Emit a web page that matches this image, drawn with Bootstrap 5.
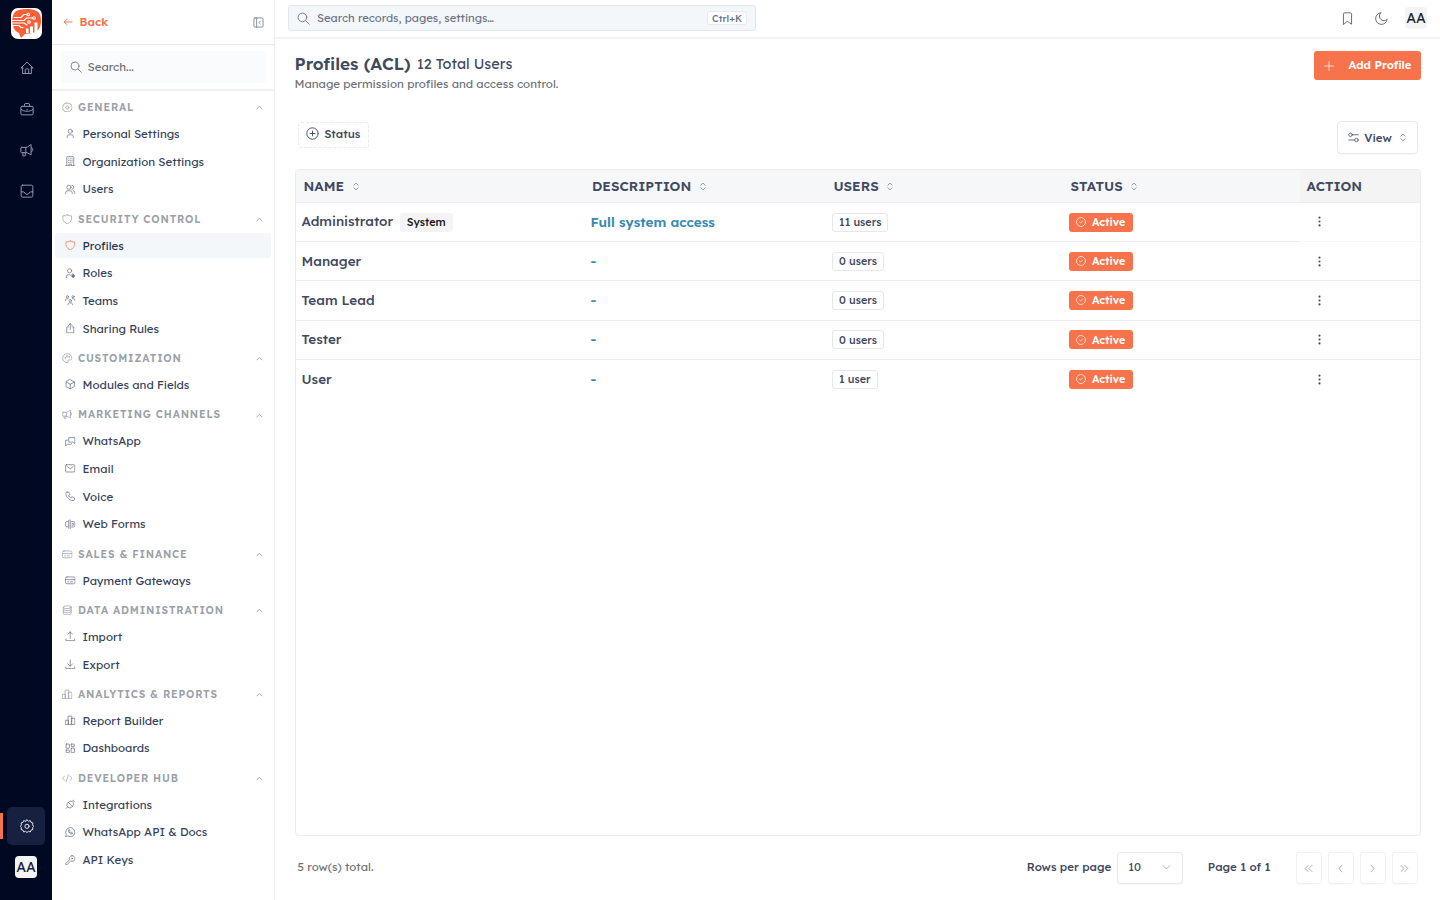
<!DOCTYPE html>
<html lang="en">
<head>
<meta charset="utf-8">
<meta name="viewport" content="width=device-width, initial-scale=1">
<title>Profiles (ACL)</title>
<link href="https://cdn.jsdelivr.net/npm/bootstrap@5.3.0/dist/css/bootstrap.min.css" rel="stylesheet">
<style>
:root{--ink:#3f4a5f;--accent:#f6734b;--line:#ebebee;--soft:#f3f7fa}
body{font-family:Lexend,Inter,sans-serif;font-size:11.52px;color:var(--ink);height:100vh;overflow:hidden;background:#fff}
svg{fill:none;stroke:currentColor;stroke-width:1.7;stroke-linecap:round;stroke-linejoin:round;flex:none;display:block}
.rail{width:52px;background:#010821;padding-top:7.5px;padding-bottom:22px}
.brand{margin-bottom:9px}
.rail-link{height:41px;color:#8f98ae;padding-left:1px}
.rail-link svg{width:14px;height:14px}
.rail-on{position:relative;width:38px;height:38px;margin:0 auto 11px;padding:0 0 1px 1px;border-radius:5px;background:#18203f;color:#e3e6ee}
.rail-on::before{content:"";position:absolute;left:-7px;top:6px;width:2.5px;height:26px;background:var(--accent)}
.initials{width:22px;height:22px;border-radius:4px;background:#f4f4f5;color:#182238;font-size:14px;line-height:22px;text-align:center}
.side{width:223px;border-right:1px solid #ececf2}
.side-top{height:45px;border-bottom:1px solid #e6e6ec;padding:0 10px 0 11px;color:#6d7484}
.back{color:var(--accent);font-weight:600;text-decoration:none;gap:6.5px}
.back svg{stroke-width:2.2}
.side-find{height:46px;border-bottom:2px solid #efeff4;padding:6px 8px 5px 9px}
.side-find div{height:32px;border-radius:4px;background:#f9fbfc;padding-left:9px;gap:5.5px;color:#6f7075}
.menu{padding:2px 3px 0 3px}
.group-title{height:28.45px;padding:1px 8px 0 7px;font-size:10.4px;font-weight:600;letter-spacing:.83px;color:#9b9fa8;gap:5px}
.group-title svg{width:10.5px;height:10.5px;margin-right:.5px;margin-bottom:1px}
.group-title svg:last-child{width:7px;height:7px;margin:0 0 0 auto;stroke-width:3}
.item{height:25px;margin-bottom:2.75px;padding:0 0 .9px 10px;gap:6.5px;color:#36425a;text-decoration:none;border-radius:3px}
.item svg{width:10.5px;height:10.5px;margin-right:.5px;color:#6d7484}
.item-on{background:var(--soft);color:#27344c}
.item-on svg{color:var(--accent)}
.top{height:39px;border-bottom:2px solid #f2f2f7;padding:5px 13px 6px 13px}
.find-all{width:468px;height:25.5px;background:#f4f7fa;border:1px solid #e2e6ee;border-radius:3px;padding:0 8px;color:#6c7487;gap:7px;font-size:11.25px}
.keys{font-size:9.7px;font-weight:500;line-height:12px;border:1px solid #e4e8ef;border-radius:3px;background:#fff;padding:0 4px;color:#6c7487;font-family:inherit}
.tools{gap:17px;color:#56617a}
.page-area{padding:0 19.5px}
.head{height:82px;padding-top:12px}
.title-row{gap:6px;height:25px}
h1{font-size:17.15px;font-weight:600;line-height:25px;margin:0}
.total{font-size:14.4px;line-height:26px}
.sub-line{line-height:15px;color:#6f7178}
.add{width:107px;height:29px;background:var(--accent);color:#fff;font-size:11.4px;font-weight:600;border-radius:3px;gap:14.5px;border:0}
.add svg{margin-left:1.5px}
.bar-row{height:48px}
.filter{height:26px;width:71.5px;border:1px dashed #e9e9eb;border-radius:3px;font-weight:500;gap:5px;margin:.5px 0 0 3px;padding-bottom:1.5px}
.view{width:81px;height:33px;border:1px solid #e8e8ea;border-radius:4px;font-weight:500;gap:5px;margin-right:2.5px;padding-right:1px;box-shadow:0 1px 2px #0000000a}
.sheet{height:667px;border:1px solid var(--line);border-radius:4px;overflow:hidden}
.grid-table{table-layout:fixed;width:100%;border-collapse:separate;border-spacing:0}
.grid-table th{height:33px;background:#f6f7f9;border-bottom:1px solid #eeeef0;font-size:13.5px;font-weight:600;padding:0 8px}
.grid-table th:nth-child(2){padding-left:8.5px}
.grid-table th:last-child{background:#f4f4f4;padding-left:7px}
.grid-table th span{display:inline-flex;align-items:center;gap:8.5px}
.grid-table th svg,.view svg:last-child{color:#8a8d94;width:6px;height:9px;stroke-width:2.2}
.view svg:last-child{margin-left:3px}
.grid-table td{height:39.2px;border-bottom:1px solid var(--line);padding:0 6px .5px;font-size:13.5px;font-weight:500}
.grid-table td:nth-child(2){color:#378ab0;font-weight:600;padding-left:7px}
.grid-table tr:last-child td{border-bottom:0}
.grid-table tbody tr:first-child td:last-child{border-bottom-color:#f8f8f9}
.grid-table td:last-child svg{margin-left:8px}
.chip{display:inline-flex;align-items:center;vertical-align:middle;height:19px;border-radius:3px;font-size:10.8px;padding:0 7px;margin-bottom:1px}
.chip-sys{background:#f4f4f5;color:#17171c;margin-left:6.5px}
.chip-count{border:1px solid #e8e8ea;padding:0 6px 0 6.5px}
.chip-live{width:64.5px;background:var(--accent);color:#fff;font-weight:600;gap:6.500px}
.foot{padding:16px 3px 0 3px;height:64px}
.foot span{padding-bottom:2px}
.foot .sub-line{padding-bottom:3px}
.pick{width:65.5px;height:32px;border:1px solid #e8e8ea;border-radius:4px;padding:0 11px 2px 10px;margin:0 25px 0 6px;box-shadow:0 1px 2px #0000000a}
.pagers{gap:6px;margin-left:25px}
.pg{width:26px;height:32px;border:1px solid #f0f0f2;border-radius:3px;color:#9c9fa8;box-shadow:0 1px 2px #00000006}
.pg svg,.pick svg{stroke-width:2.3}
.pick svg{color:#a4a7ae}
</style>
</head>
<body class="d-flex">
<svg class="d-none" aria-hidden="true">
<symbol id="home" viewBox="0 0 24 24"><path d="M5 12H1.500L12 2 22.500 12H19M4.500 11.500V21.500h15V11.500M9 21.500V15a1.500 1.500 0 0 1 1.500-1.500h3A1.500 1.500 0 0 1 15 15v6.500"/></symbol>
<symbol id="case" viewBox="0 0 24 24"><path d="M3.500 7.500h17a2 2 0 0 1 2 2V20a2 2 0 0 1-2 2h-17a2 2 0 0 1-2-2V9.500a2 2 0 0 1 2-2ZM7.500 7V5a2.500 2.500 0 0 1 2.500-2.500h4A2.500 2.500 0 0 1 16.500 5v2M2 13c6 4 14 4 20 0M12 12.500v1"/></symbol>
<symbol id="horn" viewBox="0 0 24 24"><path d="M2.500 7.500H10c4 0 8-5 9-5v18c-1 0-5-4-9-4H2.500a1 1 0 0 1-1-1v-7a1 1 0 0 1 1-1ZM10 7.500v9M5 16.500V22h4v-5.500M19.500 8c3.500 0 3.500 7 0 7"/></symbol>
<symbol id="inbox" viewBox="0 0 24 24"><rect x="2" y="2" width="20" height="20.500" rx="2.500"/><path d="M2 13.500h4.500l3.500 4h4l3.500-4H22"/></symbol>
<symbol id="gear" viewBox="0 0 24 24"><path d="m12 1.500 2.500 2.300 3.200-1 1.200 3 3.200 1-.6 3.300 2 2.400-2 2.400.6 3.200-3.200 1.100-1.200 3-3.200-1L12 23.200l-2.500-2-3.200 1-1.200-3-3.200-1.100.6-3.200-2-2.400 2-2.400L1.900 6.800l3.200-1 1.200-3 3.200 1Z"/><circle cx="12" cy="12.500" r="3.600"/></symbol>
<symbol id="back" viewBox="0 0 24 24"><path d="M21.500 12H3M10 5l-7 7 7 7"/></symbol>
<symbol id="panel" viewBox="0 0 24 24"><rect x="2" y="2" width="20" height="20" rx="2.500"/><path d="M8 2v20M16 9l-3 3 3 3"/></symbol>
<symbol id="find" viewBox="0 0 24 24"><circle cx="10" cy="10" r="8"/><path d="m16 16 6.500 6.500"/></symbol>
<symbol id="up" viewBox="0 0 24 24"><path d="m3 17 9-9 9 9"/></symbol>
<symbol id="down" viewBox="0 0 24 24"><path d="m3 7 9 9 9-9"/></symbol>
<symbol id="person" viewBox="0 0 24 24"><circle cx="12" cy="7.500" r="4.800"/><path d="M5 22.500V20a4.500 4.500 0 0 1 4.500-4.500h5A4.500 4.500 0 0 1 19 20v2.500"/></symbol>
<symbol id="building" viewBox="0 0 24 24"><path d="M1 22.500h22M4 22V3a1.500 1.500 0 0 1 1.500-1.500h13A1.500 1.500 0 0 1 20 3v19M8 6.500h1M12 6.500h.5M15.500 6.500h1M8 10.500h1M12 10.500h.5M15.500 10.500h1M8 14.500h1M12 14.500h.5M15.500 14.500h1M9 22v-3.500h6V22"/></symbol>
<symbol id="people" viewBox="0 0 24 24"><circle cx="9" cy="7.500" r="4.800"/><path d="M1.500 22.500V20A4.500 4.500 0 0 1 6 15.500h6a4.500 4.500 0 0 1 4.500 4.500v2.500M16 2.500a5 5 0 0 1 0 9.800M19 15.500a4.500 4.500 0 0 1 3.500 4.500v2.500"/></symbol>
<symbol id="shield" viewBox="0 0 24 24"><path d="M12 2C14.500 4 18 4.500 21.500 4c2 8.500-1.500 15.500-9.500 18.500C4 19.500.5 12.500 2.500 4 6 4.500 9.500 4 12 2Z"/></symbol>
<symbol id="role" viewBox="0 0 24 24"><circle cx="10.500" cy="6.500" r="4.800"/><path d="M3 22.500V20A4.500 4.500 0 0 1 7.500 15.500h4"/><path d="m18.500 13.500 4 4.500-4 4.500-4-4.500Z" fill="currentColor"/></symbol>
<symbol id="team" viewBox="0 0 24 24"><circle cx="12" cy="13" r="2.800"/><path d="M6.500 22.500c0-3 2-4.500 4-4.500h3c2 0 4 1.500 4 4.500"/><circle cx="5.500" cy="4" r="2.500"/><circle cx="18.500" cy="4" r="2.500"/><path d="M1 12.500c0-2.500 1.500-4 3.500-4H7M23 12.500c0-2.500-1.500-4-3.500-4H17"/></symbol>
<symbol id="share" viewBox="0 0 24 24"><path d="M8 9H4v13.500h16V9h-4M12 15V1.500M7.500 6 12 1.500 16.500 6"/></symbol>
<symbol id="palette" viewBox="0 0 24 24"><path d="M12 22.500A10.500 10.500 0 1 1 22.500 12c0 3-2 4-4 4h-3a2 2 0 0 0-1.500 3.500c.8 1 .3 3-2 3Z"/><circle cx="7.500" cy="11" r="1"/><circle cx="11" cy="7" r="1"/><circle cx="16" cy="9" r="1"/></symbol>
<symbol id="box" viewBox="0 0 24 24"><path d="m12 1.500 9.500 5.200v10.600L12 22.500l-9.500-5.200V6.700ZM12 12l9.500-5.300M12 12v10.500M12 12 2.500 6.700"/></symbol>
<symbol id="chat" viewBox="0 0 24 24"><path d="M9.500 3.500h13v14l-4-3.500h-9ZM6 9.500H1.500v13l4-3.500h9v-1"/></symbol>
<symbol id="mail" viewBox="0 0 24 24"><rect x="1.500" y="4" width="21" height="16.500" rx="2"/><path d="m5.500 8.500 6.500 5 6.500-5"/></symbol>
<symbol id="phone" viewBox="0 0 24 24"><path d="M5 2.500h3.500l2.500 6-3 2c1 2.500 3 4.500 5.500 5.500l2-3 6 2.500V19a3 3 0 0 1-3 3C10 22 2 14 2 5.500a3 3 0 0 1 3-3Z"/></symbol>
<symbol id="form" viewBox="0 0 24 24"><path d="M12 2v20M8.500 3v18M6 6H4a2.500 2.500 0 0 0-2.500 2.500v7A2.500 2.500 0 0 0 4 18h2M15 6h5a2.500 2.500 0 0 1 2.500 2.500v7A2.500 2.500 0 0 1 20 18h-5M16 10h3v4h-3"/></symbol>
<symbol id="creditcard" viewBox="0 0 24 24"><rect x="1" y="4.500" width="22" height="15.500" rx="3.500"/><path d="M1.500 10.500h21M6 15.500h2M12 15.500h5"/></symbol>
<symbol id="base" viewBox="0 0 24 24"><ellipse cx="12" cy="5" rx="9" ry="3.300"/><path d="M3 5v14c0 4.500 18 4.500 18 0V5M3 9.700c0 4.500 18 4.500 18 0M3 14.500c0 4.500 18 4.500 18 0"/></symbol>
<symbol id="upload" viewBox="0 0 24 24"><path d="M2 18v4h20v-4M12 17V2M6.500 7.500 12 2l5.500 5.500"/></symbol>
<symbol id="download" viewBox="0 0 24 24"><path d="M2 18v4h20v-4M12 2v14M6.500 11l5.500 5.500 5.500-5.500"/></symbol>
<symbol id="bars" viewBox="0 0 24 24"><path d="M1.500 12H8v10H1.500ZM8 2.500h7.500V22H8ZM15.500 7.500h7V22h-7Z"/></symbol>
<symbol id="tiles" viewBox="0 0 24 24"><rect x="2.500" y="2.500" width="7.500" height="9.500" rx="1"/><rect x="2.500" y="16" width="7.500" height="6" rx="1"/><rect x="14" y="2.500" width="7.500" height="5.500" rx="1"/><rect x="14" y="12" width="7.500" height="10" rx="1"/></symbol>
<symbol id="code" viewBox="0 0 24 24"><path d="m6 7-5 5 5 5M18 7l5 5-5 5M14.500 4l-5 16"/></symbol>
<symbol id="plug" viewBox="0 0 24 24"><path d="m8 8 9 9-2.500 2A6.500 6.500 0 0 1 5 10.500ZM8 8l3-2.500a6 6 0 0 1 5 0L20 2.500M17 17l2-3.500a6 6 0 0 0-.5-5L21.500 5M2.500 21.500 6 18"/></symbol>
<symbol id="wa" viewBox="0 0 24 24"><path d="m1.500 22.500 1.500-5.500A10.400 10.400 0 1 1 7 21ZM8 7.500c-.5 5 3.500 9 8.500 8.500l.5-2.500-2.500-1-1.500 1-2.500-2.500 1-1.500-1-2.500Z"/></symbol>
<symbol id="key" viewBox="0 0 24 24"><path d="M16 1.500a6.500 6.500 0 1 1-3 12L5 22H2v-3.500l8.500-7.500A6.500 6.500 0 0 1 16 1.500Z"/><circle cx="16" cy="8" r="1.200"/></symbol>
<symbol id="flag" viewBox="0 0 24 24"><path d="M4.500 22.500V4A2.500 2.500 0 0 1 7 1.500h10A2.500 2.500 0 0 1 19.500 4v18.500L12 17.500Z"/></symbol>
<symbol id="moon" viewBox="0 0 24 24"><path d="M10.500 1.500a8 8 0 0 0 12 12A10.700 10.700 0 1 1 10.500 1.500Z"/></symbol>
<symbol id="plus" viewBox="0 0 24 24"><path d="M12 1.500v21M1.500 12h21"/></symbol>
<symbol id="plusring" viewBox="0 0 24 24"><circle cx="12" cy="12" r="10.500"/><path d="M12 7.500v9M7.500 12h9"/></symbol>
<symbol id="sliders" viewBox="0 0 24 24"><circle cx="5.500" cy="6" r="3.800"/><circle cx="18.500" cy="17.500" r="3.800"/><path d="M9.500 6h13M2 17.500h12.500"/></symbol>
<symbol id="sort" viewBox="0 0 14 20"><path d="M2 7l5-5 5 5M2 13l5 5 5-5"/></symbol>
<symbol id="check" viewBox="0 0 24 24"><circle cx="12" cy="12" r="10.800"/><path d="m8.500 12.500 2.500 2 4.500-4.500"/></symbol>
<symbol id="dots" viewBox="0 0 24 24"><g fill="currentColor" stroke="none"><circle cx="12" cy="3.500" r="2.300"/><circle cx="12" cy="12" r="2.300"/><circle cx="12" cy="20.500" r="2.300"/></g></symbol>
</svg>

<aside class="rail d-flex flex-column flex-shrink-0">
  <svg class="brand mx-auto" width="31" height="31" viewBox="0 0 31 31"><g stroke="none"><rect width="31" height="31" rx="7" fill="#fff"/><path d="M4 4C9 0 24 0 28 5c3.500 5 2.500 15-2 18-4 3-9 2-12 3l-4 4-2-5C1 23-1 10 4 4Z" fill="#fb5f38"/><path d="M15 20.500h2.500V25H15ZM19 18.500h3V25h-3ZM23.500 14.500h3V24h-3Z" fill="#fff"/></g><g stroke="#fff" stroke-width="1.100"><path d="M3 9.500h7l3-3h3M1 12.500h12l2.500-2.500h6M1 15h12l3 2M1 17.500h7l2 2h2"/><circle cx="17.300" cy="6.500" r="1.300"/><circle cx="23" cy="10" r="1.300"/><circle cx="18" cy="14" r="1.300"/></g></svg>
  <a class="rail-link d-flex align-items-center justify-content-center"><svg><use href="#home"/></svg></a>
  <a class="rail-link d-flex align-items-center justify-content-center"><svg><use href="#case"/></svg></a>
  <a class="rail-link d-flex align-items-center justify-content-center"><svg><use href="#horn"/></svg></a>
  <a class="rail-link d-flex align-items-center justify-content-center"><svg><use href="#inbox"/></svg></a>
  <a class="rail-on mt-auto d-flex align-items-center justify-content-center"><svg width="14" height="14"><use href="#gear"/></svg></a>
  <div class="initials mx-auto">AA</div>
</aside>

<aside class="side flex-shrink-0">
  <div class="side-top d-flex align-items-center justify-content-between"><a href="#" class="back d-flex align-items-center"><svg width="10" height="10"><use href="#back"/></svg>Back</a><svg width="11" height="11"><use href="#panel"/></svg></div>
  <div class="side-find"><div class="d-flex align-items-center"><svg width="12" height="12"><use href="#find"/></svg><span>Search...</span></div></div>
  <nav class="menu">
    <div class="group-title d-flex align-items-center"><svg><use href="#gear"/></svg><span>GENERAL</span><svg><use href="#up"/></svg></div>
    <a class="item d-flex align-items-center"><svg><use href="#person"/></svg><span>Personal Settings</span></a>
    <a class="item d-flex align-items-center"><svg><use href="#building"/></svg><span>Organization Settings</span></a>
    <a class="item d-flex align-items-center"><svg><use href="#people"/></svg><span>Users</span></a>
    <div class="group-title d-flex align-items-center"><svg><use href="#shield"/></svg><span>SECURITY CONTROL</span><svg><use href="#up"/></svg></div>
    <a class="item item-on d-flex align-items-center"><svg><use href="#shield"/></svg><span>Profiles</span></a>
    <a class="item d-flex align-items-center"><svg><use href="#role"/></svg><span>Roles</span></a>
    <a class="item d-flex align-items-center"><svg><use href="#team"/></svg><span>Teams</span></a>
    <a class="item d-flex align-items-center"><svg><use href="#share"/></svg><span>Sharing Rules</span></a>
    <div class="group-title d-flex align-items-center"><svg><use href="#palette"/></svg><span>CUSTOMIZATION</span><svg><use href="#up"/></svg></div>
    <a class="item d-flex align-items-center"><svg><use href="#box"/></svg><span>Modules and Fields</span></a>
    <div class="group-title d-flex align-items-center"><svg><use href="#horn"/></svg><span>MARKETING CHANNELS</span><svg><use href="#up"/></svg></div>
    <a class="item d-flex align-items-center"><svg><use href="#chat"/></svg><span>WhatsApp</span></a>
    <a class="item d-flex align-items-center"><svg><use href="#mail"/></svg><span>Email</span></a>
    <a class="item d-flex align-items-center"><svg><use href="#phone"/></svg><span>Voice</span></a>
    <a class="item d-flex align-items-center"><svg><use href="#form"/></svg><span>Web Forms</span></a>
    <div class="group-title d-flex align-items-center"><svg><use href="#creditcard"/></svg><span>SALES &amp; FINANCE</span><svg><use href="#up"/></svg></div>
    <a class="item d-flex align-items-center"><svg><use href="#creditcard"/></svg><span>Payment Gateways</span></a>
    <div class="group-title d-flex align-items-center"><svg><use href="#base"/></svg><span>DATA ADMINISTRATION</span><svg><use href="#up"/></svg></div>
    <a class="item d-flex align-items-center"><svg><use href="#upload"/></svg><span>Import</span></a>
    <a class="item d-flex align-items-center"><svg><use href="#download"/></svg><span>Export</span></a>
    <div class="group-title d-flex align-items-center"><svg><use href="#bars"/></svg><span>ANALYTICS &amp; REPORTS</span><svg><use href="#up"/></svg></div>
    <a class="item d-flex align-items-center"><svg><use href="#bars"/></svg><span>Report Builder</span></a>
    <a class="item d-flex align-items-center"><svg><use href="#tiles"/></svg><span>Dashboards</span></a>
    <div class="group-title d-flex align-items-center"><svg><use href="#code"/></svg><span>DEVELOPER HUB</span><svg><use href="#up"/></svg></div>
    <a class="item d-flex align-items-center"><svg><use href="#plug"/></svg><span>Integrations</span></a>
    <a class="item d-flex align-items-center"><svg><use href="#wa"/></svg><span>WhatsApp API &amp; Docs</span></a>
    <a class="item d-flex align-items-center"><svg><use href="#key"/></svg><span>API Keys</span></a>
  </nav>
</aside>

<div class="flex-grow-1">
  <header class="top d-flex align-items-center justify-content-between">
    <div class="find-all d-flex align-items-center"><svg width="13" height="13"><use href="#find"/></svg><span>Search records, pages, settings…</span><kbd class="keys ms-auto">Ctrl+K</kbd></div>
    <div class="tools d-flex align-items-center"><svg class="me-1" width="13" height="13"><use href="#flag"/></svg><svg width="13" height="13"><use href="#moon"/></svg><div class="initials">AA</div></div>
  </header>
  <main class="page-area">
    <div class="head d-flex justify-content-between">
      <div><div class="title-row d-flex"><h1>Profiles (ACL)</h1><span class="total">12 Total Users</span></div><div class="sub-line">Manage permission profiles and access control.</div></div>
      <button class="add d-flex align-items-center justify-content-center p-0"><svg width="10" height="10"><use href="#plus"/></svg>Add Profile</button>
    </div>
    <div class="bar-row d-flex justify-content-between">
      <div class="filter d-flex align-items-center justify-content-center"><svg width="13" height="13"><use href="#plusring"/></svg>Status</div>
      <div class="view d-flex align-items-center justify-content-center"><svg width="11" height="11"><use href="#sliders"/></svg>View<svg><use href="#sort"/></svg></div>
    </div>
    <div class="sheet">
      <table class="grid-table">
        <colgroup><col width="288"><col width="242"><col width="237"><col width="237"><col></colgroup>
        <thead><tr><th><span>NAME <svg><use href="#sort"/></svg></span></th><th><span>DESCRIPTION <svg><use href="#sort"/></svg></span></th><th><span>USERS <svg><use href="#sort"/></svg></span></th><th><span>STATUS <svg><use href="#sort"/></svg></span></th><th>ACTION</th></tr></thead>
        <tbody>
          <tr><td>Administrator<span class="chip chip-sys">System</span></td><td>Full system access</td><td><span class="chip chip-count">11 users</span></td><td><span class="chip chip-live"><svg width="10" height="10"><use href="#check"/></svg>Active</span></td><td><svg width="11" height="11"><use href="#dots"/></svg></td></tr>
          <tr><td>Manager</td><td>-</td><td><span class="chip chip-count">0 users</span></td><td><span class="chip chip-live"><svg width="10" height="10"><use href="#check"/></svg>Active</span></td><td><svg width="11" height="11"><use href="#dots"/></svg></td></tr>
          <tr><td>Team Lead</td><td>-</td><td><span class="chip chip-count">0 users</span></td><td><span class="chip chip-live"><svg width="10" height="10"><use href="#check"/></svg>Active</span></td><td><svg width="11" height="11"><use href="#dots"/></svg></td></tr>
          <tr><td>Tester</td><td>-</td><td><span class="chip chip-count">0 users</span></td><td><span class="chip chip-live"><svg width="10" height="10"><use href="#check"/></svg>Active</span></td><td><svg width="11" height="11"><use href="#dots"/></svg></td></tr>
          <tr><td>User</td><td>-</td><td><span class="chip chip-count">1 user</span></td><td><span class="chip chip-live"><svg width="10" height="10"><use href="#check"/></svg>Active</span></td><td><svg width="11" height="11"><use href="#dots"/></svg></td></tr>
        </tbody>
      </table>
    </div>
    <div class="foot d-flex align-items-start">
      <div class="d-flex align-items-center w-100">
        <span class="me-auto sub-line">5 row(s) total.</span>
        <span class="fw-medium">Rows per page</span>
        <div class="pick d-flex align-items-center justify-content-between">10<svg width="9" height="9"><use href="#down"/></svg></div>
        <span class="fw-medium">Page 1 of 1</span>
        <div class="pagers d-flex">
          <div class="pg d-flex align-items-center justify-content-center"><svg width="9" height="9" viewBox="0 0 24 24"><path d="m11 4-8 8 8 8M21 4l-8 8 8 8"/></svg></div>
          <div class="pg d-flex align-items-center justify-content-center"><svg width="9" height="9" viewBox="0 0 24 24"><path d="m16 3-8 9 8 9"/></svg></div>
          <div class="pg d-flex align-items-center justify-content-center"><svg width="9" height="9" viewBox="0 0 24 24"><path d="m8 3 8 9-8 9"/></svg></div>
          <div class="pg d-flex align-items-center justify-content-center"><svg width="9" height="9" viewBox="0 0 24 24"><path d="m13 4 8 8-8 8M3 4l8 8-8 8"/></svg></div>
        </div>
      </div>
    </div>
  </main>
</div>
<script src="https://cdn.jsdelivr.net/npm/bootstrap@5.3.0/dist/js/bootstrap.bundle.min.js"></script>
</body>
</html>
